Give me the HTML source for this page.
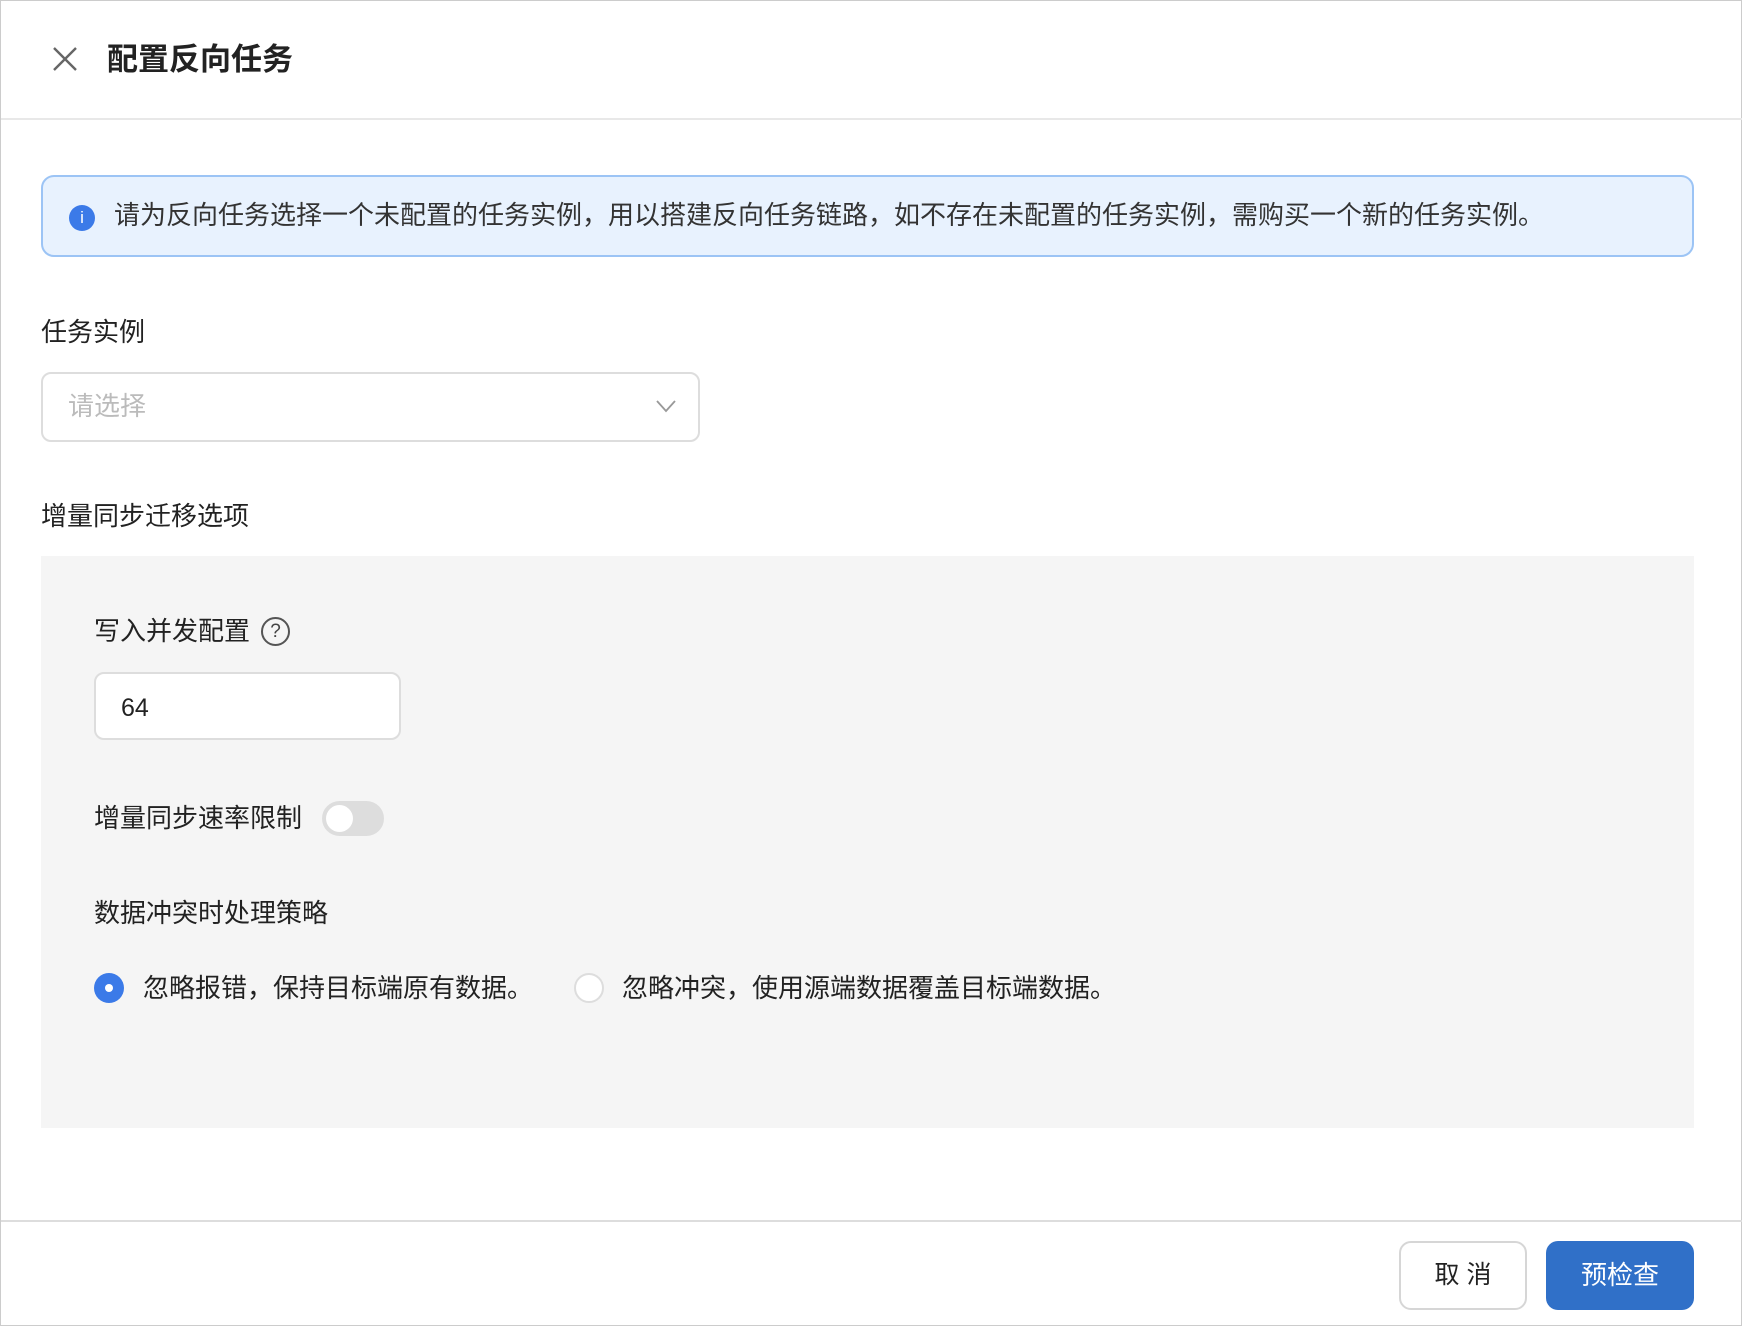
<!DOCTYPE html>
<html><head><meta charset="utf-8"><style>
*{box-sizing:border-box;margin:0;padding:0}
body{width:1742px;height:1326px;background:#fff;font-family:"Liberation Sans","Noto Sans CJK SC",sans-serif;color:#222;position:relative;overflow:hidden;border:1px solid #ccc}
.a{position:absolute}
.t{font-size:26px;line-height:1}
</style></head><body>
<svg class="a" style="left:51px;top:45px" width="26" height="26" viewBox="0 0 26 26"><path d="M2 2L24 24M24 2L2 24" stroke="#666" stroke-width="2.4"/></svg>
<div class="a" style="left:106px;top:43px;font-size:31px;font-weight:bold;color:#222;line-height:1">配置反向任务</div>
<div class="a" style="left:0;top:117px;width:1742px;height:2px;background:#e8e8e8"></div>
<div class="a" style="left:40px;top:174px;width:1653px;height:82px;background:#e8f2fe;border:2px solid #9cc4f5;border-radius:13px"></div>
<div class="a" style="left:68px;top:204px;width:26px;height:26px;border-radius:50%;background:#3b7ae8;color:#fff;font-size:17px;text-align:center;line-height:26px">i</div>
<div class="a t" style="left:113px;top:201px;color:#333">请为反向任务选择一个未配置的任务实例，用以搭建反向任务链路，如不存在未配置的任务实例，需购买一个新的任务实例。</div>
<div class="a t" style="left:40px;top:318px">任务实例</div>
<div class="a" style="left:40px;top:371px;width:659px;height:70px;border:2px solid #ddd;border-radius:10px;background:#fff"></div>
<div class="a t" style="left:67px;top:392px;color:#bbb">请选择</div>
<svg class="a" style="left:655px;top:398px" width="20" height="14"><path d="M1 2L10 12L19 2" fill="none" stroke="#999" stroke-width="1.8"/></svg>
<div class="a t" style="left:40px;top:502px">增量同步迁移选项</div>
<div class="a" style="left:40px;top:555px;width:1653px;height:572px;background:#f5f5f5"></div>
<div class="a t" style="left:93px;top:617px">写入并发配置</div>
<div class="a" style="left:260px;top:616px;width:29px;height:29px;border:2px solid #555;border-radius:50%;font-size:19px;text-align:center;line-height:25px;color:#444">?</div>
<div class="a" style="left:93px;top:671px;width:307px;height:68px;border:2px solid #ddd;border-radius:10px;background:#fff"></div>
<div class="a" style="left:120px;top:693px;font-size:25px">64</div>
<div class="a t" style="left:93px;top:804px">增量同步速率限制</div>
<div class="a" style="left:321px;top:800px;width:62px;height:35px;border-radius:18px;background:#ddd"></div>
<div class="a" style="left:325px;top:804px;width:27px;height:27px;border-radius:50%;background:#fff"></div>
<div class="a t" style="left:93px;top:899px">数据冲突时处理策略</div>
<div class="a" style="left:93px;top:972px;width:30px;height:30px;border-radius:50%;background:#3b7ae8"></div>
<div class="a" style="left:104px;top:983px;width:8px;height:8px;border-radius:50%;background:#fff"></div>
<div class="a t" style="left:142px;top:974px">忽略报错，保持目标端原有数据。</div>
<div class="a" style="left:573px;top:972px;width:30px;height:30px;border-radius:50%;background:#fff;border:2px solid #ddd"></div>
<div class="a t" style="left:621px;top:974px">忽略冲突，使用源端数据覆盖目标端数据。</div>
<div class="a" style="left:0;top:1219px;width:1742px;height:2px;background:#ddd"></div>
<div class="a" style="left:1398px;top:1240px;width:128px;height:69px;border:2px solid #d6d6d6;border-radius:12px;background:#fff;font-size:25px;text-align:center;line-height:65px">取 消</div>
<div class="a" style="left:1545px;top:1240px;width:148px;height:69px;border-radius:12px;background:#3070c8;color:#fff;font-size:26px;text-align:center;line-height:69px">预检查</div>
</body></html>
